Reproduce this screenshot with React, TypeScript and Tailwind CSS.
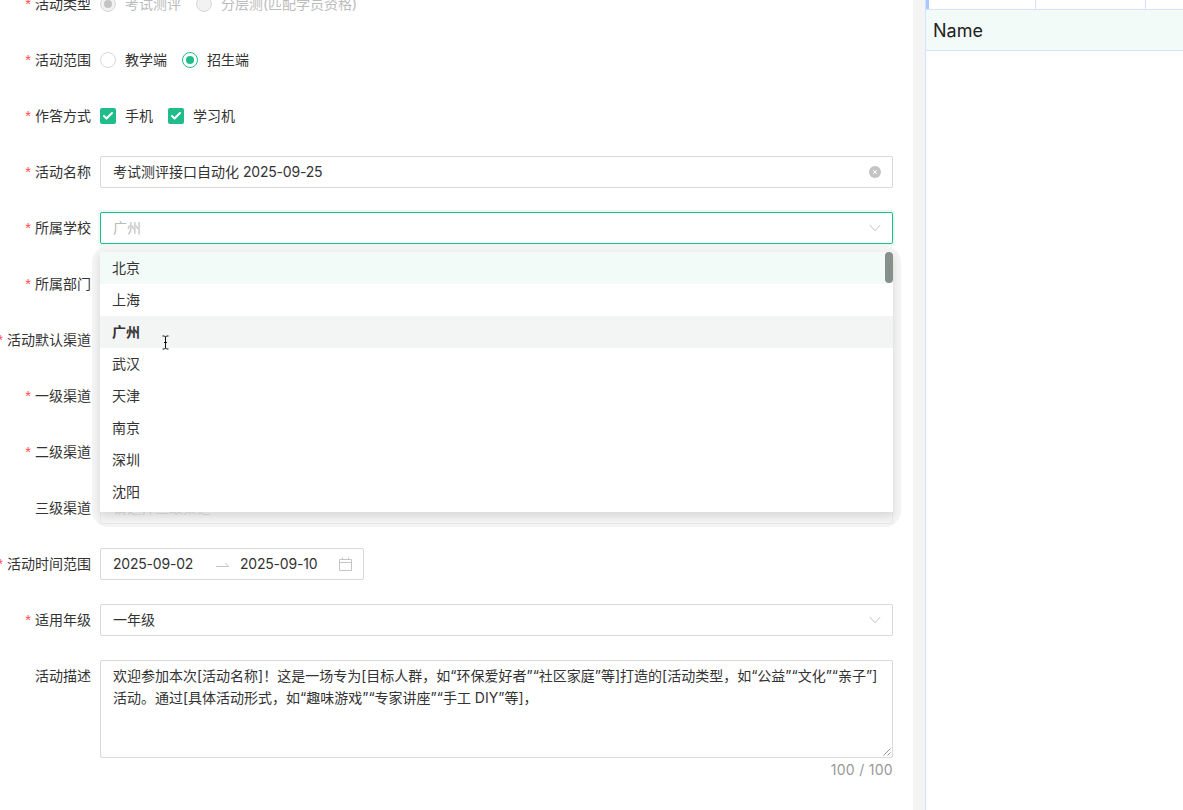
import { Check } from "lucide-react";
import type { ReactNode } from "react";

const cities = ["北京", "上海", "广州", "武汉", "天津", "南京", "深圳", "沈阳"];

const description =
  "欢迎参加本次[活动名称]！这是一场专为[目标人群，如“环保爱好者”“社区家庭”等]打造的[活动类型，如“公益”“文化”“亲子”]活动。通过[具体活动形式，如“趣味游戏”“专家讲座”“手工 DIY”等]，";

const Row = ({ label, required = true, children }: { label: string; required?: boolean; children: ReactNode }) => (
  <div className="flex h-8 items-center">
    <div className="flex w-[91px] shrink-0 items-center justify-end whitespace-nowrap text-[#333]">
      {required && <span className="mr-[4px] font-['Liberation_Sans'] text-[15px] text-[#ff4d4f]">*</span>}
      {label}
    </div>
    <div className="ml-[9px] flex min-w-0 flex-1 items-center">{children}</div>
  </div>
);

const Radio = ({ label, checked, disabled }: { label: string; checked?: boolean; disabled?: boolean }) => (
  <label className={`mr-[15px] flex items-center gap-[9px] ${disabled ? "text-[#bbb]" : "text-[#333]"}`}>
    <span
      className={`flex h-4 w-4 items-center justify-center rounded-full border ${
        disabled ? "border-[#d9d9d9] bg-[#f2f2f2]" : checked ? "border-[#20bd8b] bg-white" : "border-[#d9d9d9] bg-white"
      }`}
    >
      {checked && <span className={`h-2 w-2 rounded-full ${disabled ? "bg-[#c4c4c4]" : "bg-[#20bd8b]"}`} />}
    </span>
    {label}
  </label>
);

const CheckItem = ({ label }: { label: string }) => (
  <label className="mr-[15px] flex items-center gap-[9px] text-[#333]">
    <span className="flex h-4 w-4 items-center justify-center rounded-[2px] bg-[#20bd8b]">
      <Check className="h-[12px] w-[12px] text-white" strokeWidth={4} />
    </span>
    {label}
  </label>
);

const Box = ({ children, focused }: { children: ReactNode; focused?: boolean }) => (
  <div
    className={`flex h-8 w-full items-center justify-between rounded-[2px] border bg-white pl-3 pr-[11px] ${
      focused ? "border-[#20bd8b] shadow-[0_0_0_2px_rgba(32,189,139,0.1)]" : "border-[#d9d9d9]"
    }`}
  >
    {children}
  </div>
);

const Chevron = () => (
  <svg className="h-[8px] w-[12px]" viewBox="0 0 12 8">
    <path d="M0.8 1 6 6.8 11.2 1" stroke="#c4c4c4" strokeWidth="1" fill="none" />
  </svg>
);

const Select = ({ value, placeholder, focused }: { value?: string; placeholder?: string; focused?: boolean }) => (
  <Box focused={focused}>
    {value ? <span className="text-[#333]">{value}</span> : <span className="text-[#bbb]">{placeholder}</span>}
    <Chevron />
  </Box>
);

const App = () => (
  <div className="flex h-[810px] w-[1183px] overflow-hidden bg-white font-['Inter','Noto_Sans_CJK_SC',sans-serif] text-[14px] leading-[22px]">
    <div className="relative w-[913px] shrink-0">
      <div className="mt-[-12px] flex flex-col gap-[24px] pr-[20px]">
        <Row label="活动类型">
          <Radio label="考试测评" checked disabled />
          <Radio label="分层测(匹配学员资格)" disabled />
        </Row>
        <Row label="活动范围">
          <Radio label="教学端" />
          <Radio label="招生端" checked />
        </Row>
        <Row label="作答方式">
          <CheckItem label="手机" />
          <CheckItem label="学习机" />
        </Row>
        <Row label="活动名称">
          <Box>
            <span className="text-[#333]">
              考试测评接口自动化<span className="ml-[4px] tracking-[-0.2px]">2025-09-25</span>
            </span>
            <svg className="h-[12px] w-[12px]" viewBox="0 0 12 12">
              <circle cx="6" cy="6" r="6" fill="#c4c4c4" />
              <path d="M4 4 8 8M8 4 4 8" stroke="#fff" strokeWidth="1" />
            </svg>
          </Box>
        </Row>
        <Row label="所属学校">
          <Select placeholder="广州" focused />
        </Row>
        <Row label="所属部门">
          <Select placeholder="请选择所属部门" />
        </Row>
        <Row label="活动默认渠道">
          <Select placeholder="请选择默认渠道" />
        </Row>
        <Row label="一级渠道">
          <Select placeholder="请选择一级渠道" />
        </Row>
        <Row label="二级渠道">
          <Select placeholder="请选择二级渠道" />
        </Row>
        <Row label="三级渠道" required={false}>
          <Select placeholder="请选择三级渠道" />
        </Row>
        <Row label="活动时间范围">
          <div className="flex h-8 w-[264px] items-center rounded-[2px] border border-[#d9d9d9] bg-white pl-3 pr-[11px] tracking-[-0.2px] text-[#333]">
            <span className="w-[103px]">2025-09-02</span>
            <svg className="h-[8px] w-[13px]" viewBox="0 0 13 8">
              <path d="M0 6.5H12.5L9.5 3" stroke="#c4c4c4" strokeWidth="1" fill="none" />
            </svg>
            <span className="ml-[11px] flex-1">2025-09-10</span>
            <svg className="h-[14px] w-[13px]" viewBox="0 0 13 14">
              <path d="M0.5 2.5H12.5V13.5H0.5ZM0.5 5.5H12.5M3.5 0.5V3M9.5 0.5V3" stroke="#c4c4c4" strokeWidth="1" fill="none" />
            </svg>
          </div>
        </Row>
        <Row label="适用年级">
          <Select value="一年级" />
        </Row>
        <div className="flex">
          <div className="flex h-8 w-[91px] shrink-0 items-center justify-end text-[#333]">活动描述</div>
          <div className="ml-[9px] min-w-0 flex-1">
            <div className="relative h-[98px] rounded-[2px] border border-[#d9d9d9] px-3 py-[4px] text-[#333]">
              {description}
              <svg className="absolute bottom-px right-px h-[8px] w-[8px]" viewBox="0 0 8 8">
                <path d="M0.5 7.5 7.5 0.5M4.5 7.5 7.5 4.5" stroke="#777" strokeWidth="0.8" fill="none" />
              </svg>
            </div>
            <div className="mt-[1px] text-right tracking-[0.3px] text-[#999]">100 / 100</div>
          </div>
        </div>
      </div>

      {/* dropdown popup over the form */}
      <div className="absolute left-[92px] top-[246px] h-[281px] w-[809px] rounded-[16px] bg-[rgba(236,238,236,0.65)] pl-[8px] pr-[8px] pt-[6px]">
        <div className="relative h-[260px] overflow-hidden bg-white shadow-[0_4px_8px_rgba(0,0,0,0.12)]">
          {cities.map((city) => (
            <div
              key={city}
              className={`flex h-8 items-center px-3 text-[#333] ${
                city === "北京" ? "bg-[#f2fbf8]" : city === "广州" ? "bg-[#f3f5f4] font-semibold" : ""
              }`}
            >
              {city}
            </div>
          ))}
          <div className="absolute right-0 top-0 h-[31px] w-2 rounded-full bg-[#87908b]" />
        </div>
      </div>

      {/* text cursor */}
      <svg className="absolute left-[161px] top-[335px] h-[15px] w-[9px]" viewBox="0 0 9 15">
        <path d="M1.5 1H3.5L4.5 2L5.5 1H7.5M4.5 2V13M1.5 14H3.5L4.5 13L5.5 14H7.5M3 7.5H6" stroke="#111" strokeWidth="1" fill="none" />
      </svg>
    </div>

    <div className="w-[12px] shrink-0 bg-[#f3f4f3]" />

    <div className="min-w-0 flex-1 border-l border-[#d3e3fd]">
      <div className="flex h-[9px]">
        <div className="w-[3px] bg-[#a9c8ff]" />
        <div className="w-[107px] border-r border-[#d3e3fd]" />
        <div className="w-[110px] border-r border-[#d3e3fd]" />
      </div>
      <div className="flex h-[42px] items-center border-y border-[#d3e3fd] bg-[#f2fbf8] pl-[7px] pt-px text-[18px] text-[#222]">
        Name
      </div>
    </div>
  </div>
);

export default App;
